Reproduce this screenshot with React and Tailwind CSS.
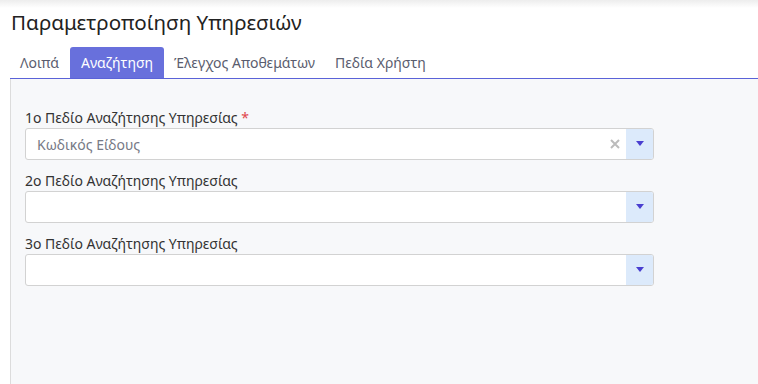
import React from "react";

const tabs = ["Λοιπά", "Αναζήτηση", "Έλεγχος Αποθεμάτων", "Πεδία Χρήστη"];

const SelectField = ({ label, required, value }) => {
  return (
    <div className="mt-[11px] first:mt-0">
      <p className="text-[14px] leading-[20px] text-[#333]">
        {label}
        {required && <span className="text-[#e0474c]"> *</span>}
      </p>
      <div className="flex h-[32px] w-[629px] overflow-hidden rounded-[3px] border border-[#d2d2d2] bg-white">
        <div className="flex flex-1 items-center pl-[11px] text-[14px] text-[#777a86]">
          {value}
        </div>
        {value && (
          <div className="flex w-[22px] items-center justify-center">
            <svg width="10" height="10" viewBox="0 0 10 10">
              <path d="M1 1L9 9M9 1L1 9" stroke="#bcbcbc" strokeWidth="2" />
            </svg>
          </div>
        )}
        <div className="flex w-[27px] items-center justify-center bg-[#dceafb]">
          <svg width="8" height="6" viewBox="0 0 8 6">
            <path d="M0 0H8L4 5Z" fill="#4a3fd0" />
          </svg>
        </div>
      </div>
    </div>
  );
};

const App = () => {
  return (
    <div className="flex h-[384px] w-full flex-col bg-white font-['Noto_Sans',sans-serif]">
      <div className="h-[8px] bg-gradient-to-b from-[#ededed] to-white" />

      <h1 className="pl-[11px] text-[20.6px] leading-[28px] text-[#222]">
        Παραμετροποίηση Υπηρεσιών
      </h1>

      <div className="ml-[10px] mt-[11px] flex h-[32px] border-b border-[#5a62d8]">
        {tabs.map((t, i) => (
          <div
            key={t}
            className={
              t === "Αναζήτηση"
                ? "flex items-center rounded-t-[3px] bg-[#6870dc] px-[11px] text-[14px] text-white"
                : i === 0
                ? "flex items-center pl-[10px] pr-[11px] text-[14px] text-[#5a5d6e]"
                : "flex items-center px-[10px] text-[14px] text-[#5a5d6e]"
            }
          >
            {t}
          </div>
        ))}
      </div>

      <div className="ml-[10px] flex-1 border-l border-[#dcdcdc] bg-[#f7f8fa] pl-[14px] pt-[29px]">
        <SelectField label="1ο Πεδίο Αναζήτησης Υπηρεσίας" required value="Κωδικός Είδους" />
        <SelectField label="2ο Πεδίο Αναζήτησης Υπηρεσίας" />
        <SelectField label="3ο Πεδίο Αναζήτησης Υπηρεσίας" />
      </div>
    </div>
  );
};

export default App;
